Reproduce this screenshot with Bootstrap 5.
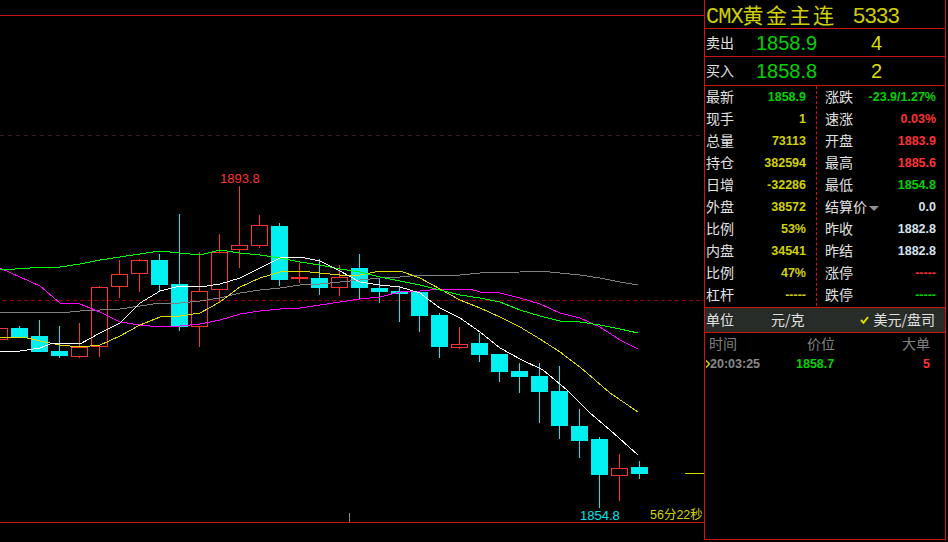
<!DOCTYPE html>
<html lang="zh">
<head>
<meta charset="utf-8">
<title>CMX黄金主连</title>
<link href="https://cdn.jsdelivr.net/npm/bootstrap@5.3.0/dist/css/bootstrap.min.css" rel="stylesheet">
<style>
html,body{height:100%;background:#000;overflow:hidden}
body{font-family:"Liberation Sans","Noto Sans CJK SC",sans-serif}
.stage{width:948px;height:542px}
.chart-pane{width:704px;height:542px}
.chart-pane svg{display:block}
.lbl-num{font-family:"Liberation Sans","Noto Sans CJK SC",sans-serif;font-size:13px}
.lbl-time{font-family:"Liberation Sans","Noto Sans CJK SC",sans-serif;font-size:12.5px}
.side{width:242px;height:540px;border-left:1px solid #c81414;border-right:1px solid #c81414;border-bottom:1px solid #c81414}
.cn{font-family:"Noto Sans CJK SC",sans-serif;font-size:14px;font-weight:400;color:#e2e2e2;line-height:1;padding-bottom:2px}
.ttl{height:29px;border-bottom:1px solid #c81414;color:#d0d000;padding-left:1px;line-height:28px;white-space:nowrap;font-family:"Liberation Mono","Noto Sans CJK SC",monospace;font-size:22px;letter-spacing:-1px}
.ttl b{font-weight:400;font-family:"Noto Sans CJK SC",sans-serif;font-size:21px;letter-spacing:2.5px}
.ttl i{font-style:normal;letter-spacing:-1.7px;margin-left:16px}
.quote{border-bottom:1px solid #c81414;padding-left:1px}
.q1{height:28px}
.q2{height:29px}
.quote .px{font-size:20px;color:#00d200;width:60px;margin-left:22px}
.quote .qt{font-size:20px;color:#dcdc00;width:12px;margin-left:55px}
.quote .cn{width:28px}
.stats{height:220px}
.colL{width:112px;padding:0 10px 0 1px;border-right:1px dashed #c81414}
.colR{flex:1;padding:0 9px 0 8px}
.stat{height:22px}
.val{font-size:12.5px;font-weight:700;line-height:1}
.yl{color:#d2d200}.gn{color:#00d200}.rd{color:#ff3232}.wh{color:#d7e2ee}
.units{height:26px;border-top:1px solid #c81414;border-bottom:1px solid #c81414;background:#282c28;padding:0 10px 0 1px;margin-top:1px}
.unit-a{margin-left:37px}
.tick{width:9px;height:8px;margin-right:5px}
.tri{width:0;height:0;border-left:5px solid transparent;border-right:5px solid transparent;border-top:5px solid #909090;margin-left:2px;margin-top:3px}
.head{height:23px;padding:3px 0 0 4px}
.head .cn{color:#808080}
.h-b{margin-left:70px}
.h-c{margin-left:67px}
.deal{height:16px;padding-left:1px}
.arr{width:4px;height:8px;flex:none}
.tm{color:#8a8a8a;width:86px}
.dl-p{width:40px}
.dl-q{width:94px;text-align:right}
</style>
</head>
<body>
<div class="stage d-flex">
  <div class="chart-pane flex-shrink-0">
    <svg id="cv" width="704" height="542" viewBox="0 0 704 542" shape-rendering="crispEdges" xmlns="http://www.w3.org/2000/svg">
      <rect x="0" y="15" width="704" height="1" fill="#c81414"/>
      <rect x="0" y="522" width="704" height="1" fill="#c81414"/>
      <rect x="349" y="513" width="1" height="9" fill="#8a8a8a"/>
      <rect x="685" y="473" width="19" height="1" fill="#d8d800"/>
      <line x1="0" x2="704" y1="135.5" y2="135.5" stroke="#3c2020" stroke-dasharray="4 4"/>
      <line x1="3" x2="704" y1="300.5" y2="300.5" stroke="#960000" stroke-dasharray="4 3"/>
      <g id="candles"></g>
      <g id="lines" fill="none"></g>
      <text class="lbl-num" x="220" y="183" fill="#ff3232">1893.8</text>
      <text class="lbl-num" x="580" y="520" fill="#00e6f0">1854.8</text>
      <text class="lbl-time" x="650" y="519" fill="#d2d200">56分22秒</text>
    </svg>
  </div>
  <aside class="side flex-shrink-0 d-flex flex-column">
    <div class="ttl">CMX<b>黄金主连</b><i>5333</i></div>
    <div class="quote q1 d-flex align-items-center"><span class="cn">卖出</span><span class="px">1858.9</span><span class="qt">4</span></div>
    <div class="quote q2 d-flex align-items-center"><span class="cn">买入</span><span class="px">1858.8</span><span class="qt">2</span></div>
    <div class="stats d-flex">
      <div class="colL d-flex flex-column">
        <div class="stat d-flex align-items-center justify-content-between"><span class="cn">最新</span><span class="val gn">1858.9</span></div>
        <div class="stat d-flex align-items-center justify-content-between"><span class="cn">现手</span><span class="val yl">1</span></div>
        <div class="stat d-flex align-items-center justify-content-between"><span class="cn">总量</span><span class="val yl">73113</span></div>
        <div class="stat d-flex align-items-center justify-content-between"><span class="cn">持仓</span><span class="val yl">382594</span></div>
        <div class="stat d-flex align-items-center justify-content-between"><span class="cn">日增</span><span class="val yl">-32286</span></div>
        <div class="stat d-flex align-items-center justify-content-between"><span class="cn">外盘</span><span class="val yl">38572</span></div>
        <div class="stat d-flex align-items-center justify-content-between"><span class="cn">比例</span><span class="val yl">53%</span></div>
        <div class="stat d-flex align-items-center justify-content-between"><span class="cn">内盘</span><span class="val yl">34541</span></div>
        <div class="stat d-flex align-items-center justify-content-between"><span class="cn">比例</span><span class="val yl">47%</span></div>
        <div class="stat d-flex align-items-center justify-content-between"><span class="cn">杠杆</span><span class="val yl">-----</span></div>
      </div>
      <div class="colR d-flex flex-column">
        <div class="stat d-flex align-items-center justify-content-between"><span class="cn">涨跌</span><span class="val gn">-23.9/1.27%</span></div>
        <div class="stat d-flex align-items-center justify-content-between"><span class="cn">速涨</span><span class="val rd">0.03%</span></div>
        <div class="stat d-flex align-items-center justify-content-between"><span class="cn">开盘</span><span class="val rd">1883.9</span></div>
        <div class="stat d-flex align-items-center justify-content-between"><span class="cn">最高</span><span class="val rd">1885.6</span></div>
        <div class="stat d-flex align-items-center justify-content-between"><span class="cn">最低</span><span class="val gn">1854.8</span></div>
        <div class="stat d-flex align-items-center justify-content-between"><span class="d-flex align-items-center"><span class="cn">结算价</span><span class="tri"></span></span><span class="val wh">0.0</span></div>
        <div class="stat d-flex align-items-center justify-content-between"><span class="cn">昨收</span><span class="val wh">1882.8</span></div>
        <div class="stat d-flex align-items-center justify-content-between"><span class="cn">昨结</span><span class="val wh">1882.8</span></div>
        <div class="stat d-flex align-items-center justify-content-between"><span class="cn">涨停</span><span class="val rd">-----</span></div>
        <div class="stat d-flex align-items-center justify-content-between"><span class="cn">跌停</span><span class="val gn">-----</span></div>
      </div>
    </div>
    <div class="units d-flex align-items-center">
      <span class="cn">单位</span><span class="cn unit-a">元/克</span>
      <span class="d-flex align-items-center ms-auto"><svg class="tick" viewBox="0 0 9 8"><polyline points="1,4 3.5,6.8 8,1" fill="none" stroke="#dcdc00" stroke-width="2"/></svg><span class="cn">美元/盘司</span></span>
    </div>
    <div class="head d-flex">
      <span class="cn">时间</span><span class="cn h-b">价位</span><span class="cn h-c">大单</span>
    </div>
    <div class="deal d-flex align-items-center">
      <svg class="arr" viewBox="0 0 4 8" aria-label="当前"><polyline points="0,0.5 3.5,4 0,7.5" fill="none" stroke="#dcdc00" stroke-width="1.4"/></svg><span class="val tm">20:03:25</span><span class="val gn dl-p">1858.7</span><span class="val rd dl-q">5</span>
    </div>
  </aside>
</div>
<script src="https://cdn.jsdelivr.net/npm/bootstrap@5.3.0/dist/js/bootstrap.bundle.min.js"></script>
<script>
var C=[
[-1,'r',328,340,328,340],[19,'c',328,338,326,338],[39,'c',336,352,320,352],[59,'c',351,356,326,358],[79,'r',347,357,323,358],
[99,'r',287,347,286,357],[119,'r',274,287,260,298],[139,'r',260,274,259,292],[159,'c',260,285,254,292],[179,'c',284,327,214,331],
[199,'r',291,327,252,347],[219,'r',252,290,234,302],[239,'r',245,250,186,268],[259,'r',225,246,215,248],[279,'c',226,280,223,286],
[299,'r',277,279,263,283],[319,'c',278,288,259,295],[339,'r',277,288,265,296],[359,'c',268,288,254,300],[379,'c',288,292,279,303],
[399,'c',291,294,286,322],[419,'c',292,316,292,332],[439,'c',315,347,313,358],[459,'r',344,348,327,349],[479,'c',343,355,333,362],
[499,'c',354,372,354,382],[519,'c',371,377,363,393],[539,'c',376,392,363,423],[559,'c',391,426,366,439],[579,'c',426,441,409,458],
[599,'c',439,475,437,508],[619,'r',468,476,454,501],[639,'c',467,474,461,479]];
var h='';
C.forEach(function(k){var x=k[0],t=k[2],b=k[3],w=k[4],v=k[5];
 if(k[1]=='c'){h+='<rect x="'+x+'" y="'+w+'" width="1" height="'+(v-w)+'" fill="#00f0f0"/><rect x="'+(x-8)+'" y="'+t+'" width="17" height="'+(b-t)+'" fill="#00f0f0"/>';}
 else{h+='<rect x="'+x+'" y="'+w+'" width="1" height="'+(t-w)+'" fill="#ff3232"/><rect x="'+x+'" y="'+b+'" width="1" height="'+(v-b)+'" fill="#ff3232"/><rect x="'+(x-7.5)+'" y="'+(t+.5)+'" width="16" height="'+(b-t-1)+'" fill="none" stroke="#ff3232"/>';}
});
document.getElementById('candles').innerHTML=h;
var L={
'#808080':'0,312 70,312 80,311 100,310 120,309 140,306 160,303 180,303 200,301 220,298 240,293 260,290 280,288 300,285 320,284 340,282 360,280 380,278 400,277 420,275 460,275 480,273 520,272 540,271 560,273 580,275 600,278 620,282 638,285',
'#ff00ff':'0,268 40,286 60,303 80,304 100,312 120,322 140,325 160,327 180,326 200,324 220,320 240,314 260,311 280,309 300,308 320,305 340,302 360,299 380,297 400,292 420,291 440,289 470,289 480,292 500,293 520,298 540,304 560,313 580,318 600,327 620,340 638,349',
'#dcdc00':'0,337 23,337 40,341 60,345 80,347 100,345 120,336 140,325 160,317 180,316 200,313 220,302 240,287 260,278 280,272 300,271 320,273 340,275 360,275 380,271 400,271 420,278 440,289 460,300 480,308 500,317 520,327 540,339 560,352 580,367 610,393 638,412',
'#00ff00':'0,270 30,268 60,267 80,264 100,260 133,255 160,251 180,253 200,255 220,250 240,253 260,255 280,258 300,262 320,265 340,269 360,272 380,277 400,281 420,285 440,290 460,295 480,298 500,302 520,310 540,316 560,321 580,322 600,325 620,329 638,333',
'#ffffff':'0,352 20,351 40,348 53,343 60,343 80,344 100,333 120,323 140,303 160,291 180,286 200,287 220,284 240,278 260,268 280,258 300,257 320,261 340,271 360,282 380,285 400,287 420,293 440,308 460,318 480,332 500,348 520,359 543,370 567,390 590,413 610,430 638,455'
};
var s='';for(var c in L){s+='<polyline points="'+L[c]+'" stroke="'+c+'"/>';}
document.getElementById('lines').innerHTML=s;
</script>
</body>
</html>
